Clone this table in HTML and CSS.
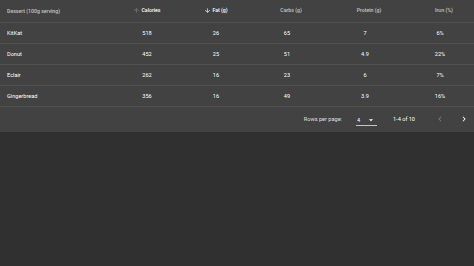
FILE: index.html
```html
<!DOCTYPE html>
<html lang="en">
<head>
<meta charset="utf-8">
<title>Desserts</title>
<link rel="stylesheet" href="styles.css">
</head>
<body>
<div class="paper">
  <table class="table">
    <colgroup>
      <col class="c-name"><col class="c-cal"><col class="c-fat"><col class="c-carbs"><col class="c-protein"><col>
    </colgroup>
    <thead>
      <tr>
        <th class="left"><span class="label">Dessert (100g serving)</span></th>
        <th><span class="sort hover"><svg class="icon" viewBox="0 0 24 24"><path d="M4 12l1.41 1.41L11 7.83V20h2V7.83l5.58 5.59L20 12l-8-8-8 8z"/></svg>Calories</span></th>
        <th><span class="sort active"><svg class="icon" viewBox="0 0 24 24"><path d="M20 12l-1.41-1.41L13 16.17V4h-2v12.17l-5.58-5.59L4 12l8 8 8-8z"/></svg>Fat (g)</span></th>
        <th><span class="sort"><svg class="icon" viewBox="0 0 24 24"><path d="M4 12l1.41 1.41L11 7.83V20h2V7.83l5.58 5.59L20 12l-8-8-8 8z"/></svg>Carbs (g)</span></th>
        <th><span class="sort"><svg class="icon" viewBox="0 0 24 24"><path d="M4 12l1.41 1.41L11 7.83V20h2V7.83l5.58 5.59L20 12l-8-8-8 8z"/></svg>Protein (g)</span></th>
        <th><span class="sort"><svg class="icon" viewBox="0 0 24 24"><path d="M4 12l1.41 1.41L11 7.83V20h2V7.83l5.58 5.59L20 12l-8-8-8 8z"/></svg>Iron (%)</span></th>
      </tr>
    </thead>
    <tbody>
      <tr><td class="left">KitKat</td><td>518</td><td>26</td><td>65</td><td>7</td><td>6%</td></tr>
      <tr><td class="left">Donut</td><td>452</td><td>25</td><td>51</td><td>4.9</td><td>22%</td></tr>
      <tr><td class="left">Eclair</td><td>262</td><td>16</td><td>23</td><td>6</td><td>7%</td></tr>
      <tr><td class="left">Gingerbread</td><td>356</td><td>16</td><td>49</td><td>3.9</td><td>16%</td></tr>
    </tbody>
  </table>
  <div class="pagination">
    <span class="rows-label">Rows per page:</span>
    <div class="select">
      <span class="select-value">4</span>
      <svg class="caret" viewBox="0 0 24 24"><path d="M7 10l5 5 5-5z"/></svg>
    </div>
    <span class="displayed">1-4 of 10</span>
    <div class="actions">
      <button class="nav disabled" type="button" aria-label="Previous page"><svg viewBox="0 0 24 24"><path d="M15.41 16.59L10.83 12l4.58-4.59L14 6l-6 6 6 6 1.41-1.41z"/></svg></button>
      <button class="nav" type="button" aria-label="Next page"><svg viewBox="0 0 24 24"><path d="M8.59 16.59L13.17 12 8.59 7.41 10 6l6 6-6 6-1.41-1.41z"/></svg></button>
    </div>
  </div>
</div>
</body>
</html>
```

FILE: styles.css
```css
* { box-sizing: border-box; }
html, body {
  margin: 0;
  padding: 0;
  background: #303030;
  font-family: Roboto, "Liberation Sans", sans-serif;
  color: #fff;
}
.paper {
  background: #424242;
  width: 474px;
  box-shadow: 0 1px 2px rgba(0,0,0,0.35);
}
.table {
  width: 100%;
  border-collapse: collapse;
  table-layout: fixed;
}
.c-name { width: 112px; }
.c-cal { width: 70px; }
.c-fat { width: 68px; }
.c-carbs { width: 74px; }
.c-protein { width: 82px; }
th, td {
  padding: 0;
  text-align: center;
  border-bottom: 1px solid #515151;
  white-space: nowrap;
}
th {
  height: 22px;
  font-size: 5.2px;
  font-weight: 500;
  color: rgba(255,255,255,0.7);
}
td {
  height: 21px;
  font-size: 5.6px;
  font-weight: 400;
  color: #fff;
}
.left {
  text-align: left;
  padding-left: 7px;
}
.sort {
  display: inline-flex;
  align-items: center;
}
.icon {
  width: 7px;
  height: 7px;
  margin-right: 1px;
  fill: currentColor;
  opacity: 0;
}
.sort.hover { color: #fff; }
.sort.hover .icon { opacity: 0.35; }
.sort.active { color: #fff; }
.sort.active .icon { opacity: 1; }
.pagination {
  height: 25px;
  display: flex;
  align-items: center;
  justify-content: flex-end;
  font-size: 5.6px;
  color: #fff;
}
.rows-label { color: rgba(255,255,255,0.85); }
.select {
  margin-left: 14px;
  width: 21px;
  height: 11px;
  display: flex;
  align-items: center;
  padding-left: 1px;
  border-bottom: 1px solid rgba(255,255,255,0.7);
  margin-top: 3px;
}
.select-value { flex: 1; }
.caret {
  width: 10px;
  height: 10px;
  fill: #fff;
  margin-right: 1px;
}
.displayed { margin-left: 16px; }
.actions {
  margin-left: 15px;
  display: flex;
  gap: 4px;
}
.nav {
  width: 20px;
  height: 20px;
  padding: 0;
  border: 0;
  background: none;
  display: flex;
  align-items: center;
  justify-content: center;
}
.nav svg {
  width: 10px;
  height: 10px;
  fill: #fff;
}
.nav.disabled svg { fill: rgba(255,255,255,0.3); }
```
